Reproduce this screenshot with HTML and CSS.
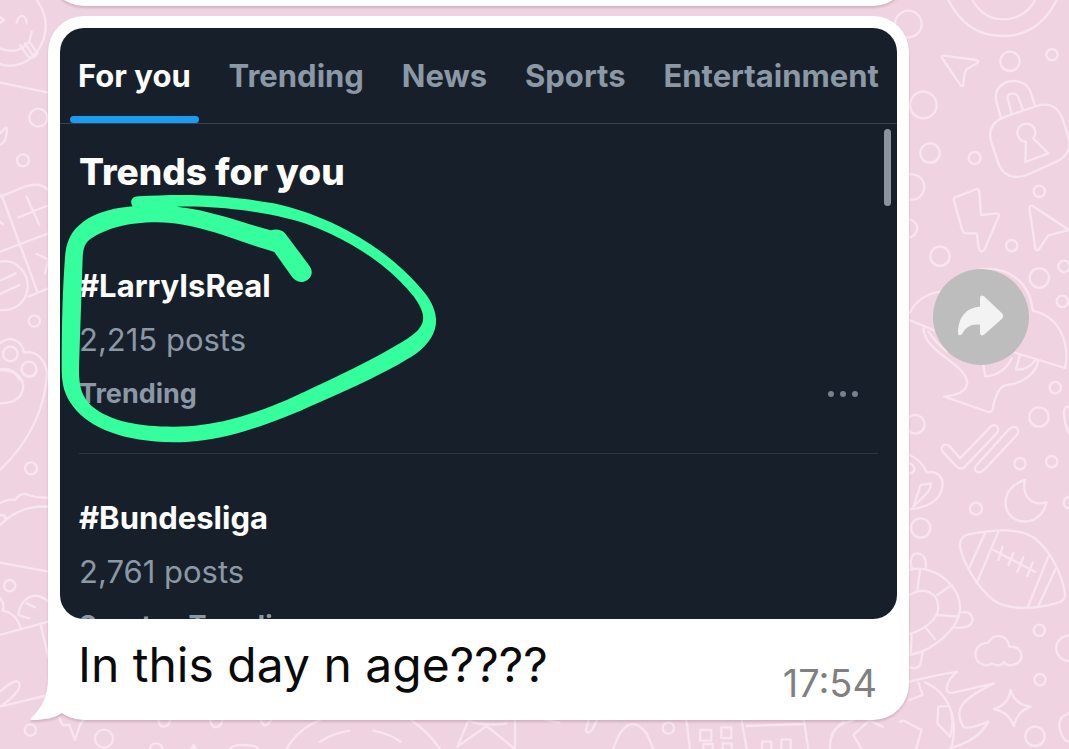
FILE: index.html
```html
<!DOCTYPE html>
<html lang="en">
<head>
<meta charset="utf-8">
<meta name="viewport" content="width=device-width, initial-scale=1">
<title>Chat</title>
<link rel="stylesheet" href="styles.css">
</head>
<body>
<main class="chat">
  <svg class="wallpaper" viewBox="0 0 1069 749" preserveAspectRatio="xMidYMid slice" aria-hidden="true">
    <!-- left edge, upper -->
    <g transform="scale(.33333)">
      <path d="M110 0C155 60 140 130 95 172C60 202 20 200 0 192M0 145C35 160 65 150 88 125L95 95M60 135L85 170Q102 180 112 160L88 125M75 130L98 165M50 68Q56 45 68 48Q80 52 80 70M0 52L12 60L2 68M0 248L145 278M0 400Q22 375 20 385Q22 425 0 435"/>
      <circle cx="115" cy="353" r="27"/><circle cx="69" cy="481" r="18"/><circle cx="103" cy="963" r="17"/>
      <path d="M0 590L75 560Q120 545 145 570M5 585L112 875M0 755L145 700M80 590L118 675M55 652L140 618M110 762L145 778L135 820M0 665L8 672M85 890L145 865"/>
      <path d="M0 785C50 775 85 820 83 862C80 905 45 935 0 930M0 842L47 820M0 882L58 855"/>
      <circle cx="31" cy="1062" r="22"/><circle cx="87" cy="1107" r="22"/>
      <path d="M0 1030C30 1005 65 1020 72 1058C110 1050 140 1080 142 1130M0 1108Q40 1100 58 1140"/>
    </g>
    <!-- left edge, lower -->
    <g transform="translate(0 370) scale(.33333)">
      <path d="M0 0Q65 0 70 50Q65 100 0 100M65 0Q70 20 88 20Q108 18 110 0M142 0Q135 170 0 300M0 400Q25 385 45 390Q65 365 85 375Q115 385 145 383M0 465Q60 405 145 410M0 435Q20 435 15 445M0 578L145 605M0 685Q15 700 8 722Q50 730 62 775M0 795L145 755M55 735C60 690 100 655 145 695M80 700L105 712M62 738L88 745M122 765L145 860M0 965Q50 920 58 940Q65 965 0 1010M0 1010L145 975M178 1045L188 1065L208 1065L225 1110L240 1065L250 1050"/>
      <circle cx="93" cy="295" r="18"/><circle cx="29" cy="647" r="17"/><circle cx="91" cy="1080" r="17"/><circle cx="312" cy="1106" r="27"/>
    </g>
    <!-- strip under the message -->
    <g transform="translate(20 560) scale(.33333)">
      <path d="M390 567Q392 550 408 550Q425 550 428 567M515 567L520 555L528 567M630 567Q640 553 675 555Q710 555 715 567M800 567Q830 510 900 480M900 545Q940 520 988 512M415 480Q420 502 432 500Q447 498 450 480M570 480Q575 502 588 502Q604 500 607 480M722 480Q730 500 740 495L755 480"/>
    </g>
    <g transform="translate(360 600) scale(.33333)">
      <path d="M40 392Q85 400 122 425M155 362Q205 395 240 447M292 440L325 362M292 440L380 378L465 447L465 362M325 362Q370 380 440 370M540 355L598 368M685 362L678 390Q680 405 695 392L710 362M760 447C785 370 820 350 860 400L880 447M978 350L990 447M1145 362L1160 447M1160 378L1330 372M1330 350L1345 447M1020 390H1054V422H1020ZM1084 382H1114V414H1084ZM1030 447V432H1058V447M1088 447V430H1115V447M1206 447V425H1234V447M1264 447V418H1292V447M1415 405Q1430 370 1480 362M1505 447L1480 405L1528 362L1568 380M1410 447Q1405 400 1450 365"/>
      <circle cx="925" cy="384" r="17"/>
    </g>
    <!-- right edge, upper -->
    <g transform="translate(900 0) scale(.33333)">
      <path d="M145 0C180 70 235 108 308 108S435 70 470 0M217 0C240 40 270 58 308 58S385 40 405 0"/>
      <circle cx="25" cy="72" r="40"/><circle cx="330" cy="184" r="29"/><circle cx="456" cy="164" r="17"/><circle cx="70" cy="315" r="40"/><circle cx="90" cy="459" r="29"/><circle cx="224" cy="474" r="18"/><circle cx="35" cy="561" r="38"/><circle cx="25" cy="685" r="27"/><circle cx="418" cy="574" r="17"/><circle cx="335" cy="737" r="17"/><circle cx="120" cy="769" r="29"/>
      <path d="M130 167L230 180Q240 184 230 190L200 208Q192 216 190 255Q185 262 180 253L126 174Q122 168 130 167Z"/>
      <path d="M303 355L288 300C282 265 310 243 342 243C375 243 390 265 395 285L405 318M335 342L323 295Q322 280 340 280Q353 282 357 298L370 330"/>
      <path d="M310 352L410 318C450 305 475 325 487 355L505 410C515 445 500 470 470 485L380 525C340 540 310 525 297 495L275 430C262 390 280 365 310 352Z"/>
      <path d="M378 425A27 27 0 1 1 400 415L445 460L376 486Z"/>
      <path d="M165 592L230 567Q238 567 238 578L243 645L290 640Q300 640 295 652L253 750Q243 760 237 748L230 700L197 700Q190 700 187 690L162 603Q160 595 165 592Z"/>
      <path d="M398 618L507 690L445 706L415 750Q408 755 406 745L388 625Q390 614 398 618Z"/>
    </g>
    <!-- right edge, middle -->
    <g transform="translate(900 240) scale(.33333)">
      <circle cx="418" cy="114" r="29"/><circle cx="492" cy="79" r="17"/><circle cx="487" cy="184" r="17"/><circle cx="466" cy="443" r="17"/><circle cx="417" cy="531" r="29"/><circle cx="46" cy="553" r="28"/><circle cx="360" cy="671" r="17"/><circle cx="455" cy="665" r="17"/>
      <path d="M28 220Q60 160 125 155M28 240L105 272M240 88C330 78 390 130 398 212M345 338L495 384C510 310 480 230 398 212M70 265C75 340 200 370 202 430Q195 465 132 470L265 516Q275 518 278 507Q290 440 320 435C370 430 410 400 415 360M85 275Q110 310 140 335M250 375L256 410Q310 405 335 355M360 345L348 388Q380 392 405 362M507 500Q490 500 492 520Q495 560 507 580"/>
      <path d="M130 638C115 622 135 605 150 620L180 655L270 562C285 545 305 565 288 582L195 680Q182 692 170 680ZM230 675L325 570C345 548 365 570 348 588L252 690C235 705 215 690 230 675Z"/>
      <path d="M28 645Q65 660 80 698C115 690 135 715 125 750Q110 800 28 808M28 670Q45 675 43 690Q40 700 28 700M40 800L62 735L92 730Q95 745 75 765Z"/>
    </g>
    <!-- right edge, lower -->
    <g transform="translate(900 480) scale(.33333)">
      <circle cx="228" cy="86" r="18"/><circle cx="62" cy="144" r="29"/><circle cx="418" cy="451" r="17"/><circle cx="420" cy="599" r="17"/><circle cx="405" cy="769" r="29"/><circle cx="508" cy="68" r="17"/><circle cx="507" cy="505" r="38"/>
      <path d="M375 0C365 50 395 80 440 67C430 110 395 130 360 123C300 110 300 20 375 0Z"/>
      <path d="M205 163C300 145 370 145 410 180C455 220 485 280 495 340Q497 360 475 368C400 390 320 390 280 360C230 320 190 250 180 200Q178 170 205 163ZM255 160L208 262M295 155L230 310M445 230L383 382M468 265L415 378M280 210L405 275M308 200L295 240M340 220L325 255M370 232L352 275M398 248L382 288"/>
      <path d="M28 270C90 250 185 310 180 390C175 440 110 510 28 525M28 345C70 320 115 335 115 385C112 420 70 450 28 462M60 270L52 330M150 318L112 345M110 405L178 410M75 440L105 478M35 460L32 520M35 265Q25 220 55 220Q80 225 78 262M180 398Q215 390 218 420Q215 448 160 442M68 515L62 550Q55 570 28 562"/>
      <path d="M255 555C215 550 215 490 265 488C280 460 320 460 328 500C370 495 380 550 335 555Q320 560 312 545Q300 565 275 550Q268 557 255 555Z"/>
      <path d="M332 630Q345 675 392 680Q350 695 342 738Q325 695 282 687Q325 675 332 630Z"/>
      <path d="M28 605Q110 585 172 575C140 600 125 645 160 638L282 610C180 660 160 690 190 740Q205 750 265 725C240 770 200 790 150 805M75 607C150 640 175 720 155 800M55 608L68 645L28 660M115 680L148 678Q165 720 150 770L112 730ZM0 725L12 722L65 750L48 807M507 700Q470 710 480 750Q490 785 507 785"/>
    </g>
  </svg>

  <div class="bubble bubble-previous"></div>

  <div class="row">
    <article class="bubble message">
      <svg class="tail" viewBox="0 0 60 52" aria-hidden="true"><path d="M20 0V8C20 28 13 40 3 49Q1 51 5 51C16 51 27 49 34 44Q42 50 54 50V0Z"/></svg>
      <section class="media" aria-label="Trends">
        <nav class="tabs">
          <a class="tab tab-active" href="#for-you" aria-current="page">For you</a>
          <a class="tab" href="#trending">Trending</a>
          <a class="tab" href="#news">News</a>
          <a class="tab" href="#sports">Sports</a>
          <a class="tab" href="#entertainment">Entertainment</a>
        </nav>
        <div class="trends">
          <h2 class="title">Trends for you</h2>
          <div class="trend">
            <h3 class="name">#LarryIsReal</h3>
            <p class="posts">2,215 posts</p>
            <div class="trend-foot">
              <span class="category">Trending</span>
              <button class="more" type="button" aria-label="More">
                <svg viewBox="0 0 30 8" aria-hidden="true"><circle cx="3" cy="4" r="3"/><circle cx="15" cy="4" r="3"/><circle cx="27" cy="4" r="3"/></svg>
              </button>
            </div>
          </div>
          <div class="trend">
            <h3 class="name">#Bundesliga</h3>
            <p class="posts">2,761 posts</p>
            <div class="trend-foot"><span class="category">Sports · Trending</span></div>
          </div>
        </div>
        <span class="scroll-thumb"></span>
        <svg class="marker" viewBox="0 0 1170 825" aria-hidden="true">
          <path fill-rule="evenodd" d="M235 49C370 40 500 44 640 70C830 110 1000 220 1095 340C1145 405 1140 465 1070 520C980 580 850 635 720 693C590 747 470 787 340 787C190 784 90 745 40 680C15 645 5 620 5 560C5 430 8 320 16 220C22 170 45 140 85 115C125 93 165 84 218 79C208 65 215 50 235 49Z
          M290 127C200 128 140 145 90 178C73 192 70 205 68 235L57 560C56 620 65 650 95 678C150 725 240 740 340 740C460 740 560 710 680 660C800 605 920 550 1030 484C1100 440 1106 412 1060 348C980 250 870 180 740 132C640 98 480 76 350 80C440 88 540 125 632 151Q660 144 675 160L748 257C768 285 742 308 722 306Q704 304 692 285L643 216C520 180 410 127 290 127Z"/>
        </svg>
      </section>
      <footer class="caption">
        <p class="text">In this day n age????</p>
        <time class="time" datetime="17:54">17:54</time>
      </footer>
    </article>
    <button class="forward" type="button" aria-label="Forward">
      <svg viewBox="0 0 288 288" aria-hidden="true"><path d="M141 88Q141 75 153 82L207 133Q214 141 207 149L153 197Q141 204 141 190V167C115 164 98 174 88 194Q75 206 75 188C77 145 98 116 141 113Z"/></svg>
    </button>
  </div>
</main>
</body>
</html>
```
FILE: styles.css
```css
* { box-sizing: border-box; }

body {
  margin: 0;
  background: #f0d3e0;
  font-family: Inter, "Liberation Sans", sans-serif;
}

h2, h3, p { margin: 0; }

button {
  padding: 0;
  border: 0;
  cursor: pointer;
}

.chat {
  position: relative;
  min-height: 100vh;
  padding: 0 40px 28px 48px;
  overflow: hidden;
}

.wallpaper {
  position: absolute;
  inset: 0;
  width: 100%;
  height: 100%;
  fill: none;
  stroke: #f8e5ee;
  stroke-width: 7;
  stroke-linejoin: round;
  stroke-linecap: round;
}

.bubble {
  position: relative;
  background: #fff;
  border-radius: 36px;
  filter: drop-shadow(0 2px 1px rgba(120, 80, 100, 0.25));
}

.bubble-previous {
  height: 80px;
  margin: -74px 120px 10px 0;
}

.row {
  display: flex;
  align-items: flex-start;
  gap: 24px;
}

.message {
  flex: 1;
  min-width: 0;
  padding: 12px;
}

.tail {
  position: absolute;
  left: -20px;
  bottom: -1px;
  width: 60px;
  height: 52px;
  fill: #fff;
}

.media {
  position: relative;
  height: 591px;
  overflow: hidden;
  border-radius: 24px;
  background: #17202a;
  color: #fff;
}

.tabs {
  display: flex;
  justify-content: space-between;
  padding: 0 18px;
  border-bottom: 1px solid #37424d;
}

.tab {
  position: relative;
  color: #8b98a5;
  font-size: 31px;
  font-weight: 700;
  line-height: 95px;
  text-decoration: none;
  white-space: nowrap;
}

.tab-active { color: #fff; }

.tab-active::after {
  content: "";
  position: absolute;
  right: -8px;
  bottom: 0;
  left: -8px;
  height: 7px;
  border-radius: 4px;
  background: #1d9bf0;
}

.trends { padding: 24px 19px 0; }

.title {
  margin-bottom: 26px;
  font-size: 37px;
  font-weight: 800;
  line-height: 48px;
}

.trend {
  display: grid;
  gap: 14px;
  padding: 44px 0 39px;
  border-bottom: 1px solid #2b3641;
}

.name {
  font-size: 31px;
  font-weight: 700;
  line-height: 40px;
}

.posts {
  color: #8b98a5;
  font-size: 31px;
  line-height: 40px;
}

.trend-foot {
  display: flex;
  align-items: center;
  justify-content: space-between;
  padding-right: 20px;
}

.category {
  color: #8b98a5;
  font-size: 27px;
  font-weight: 700;
  line-height: 40px;
}

.more {
  display: flex;
  background: none;
}

.more svg {
  width: 30px;
  height: 8px;
  fill: #75818d;
}

.scroll-thumb {
  position: absolute;
  top: 101px;
  right: 6px;
  width: 7px;
  height: 77px;
  border-radius: 4px;
  background: #8b939c;
}

.marker {
  position: absolute;
  top: 152px;
  left: 0;
  width: 390px;
  height: 275px;
  fill: #35ff9c;
}

.caption {
  display: flex;
  justify-content: space-between;
  gap: 24px;
  padding: 18px 20px 3px 18px;
}

.text {
  color: #0a0a0a;
  font-size: 48px;
  line-height: 56px;
}

.time {
  align-self: flex-end;
  padding-top: 24px;
  color: #808080;
  font-size: 38px;
  line-height: 44px;
}

.forward {
  position: relative;
  flex: none;
  width: 96px;
  height: 96px;
  margin-top: 253px;
  border-radius: 50%;
  background: #bdbdbd;
}

.forward svg {
  display: block;
  width: 96px;
  height: 96px;
  fill: #f3f3f3;
}
```
